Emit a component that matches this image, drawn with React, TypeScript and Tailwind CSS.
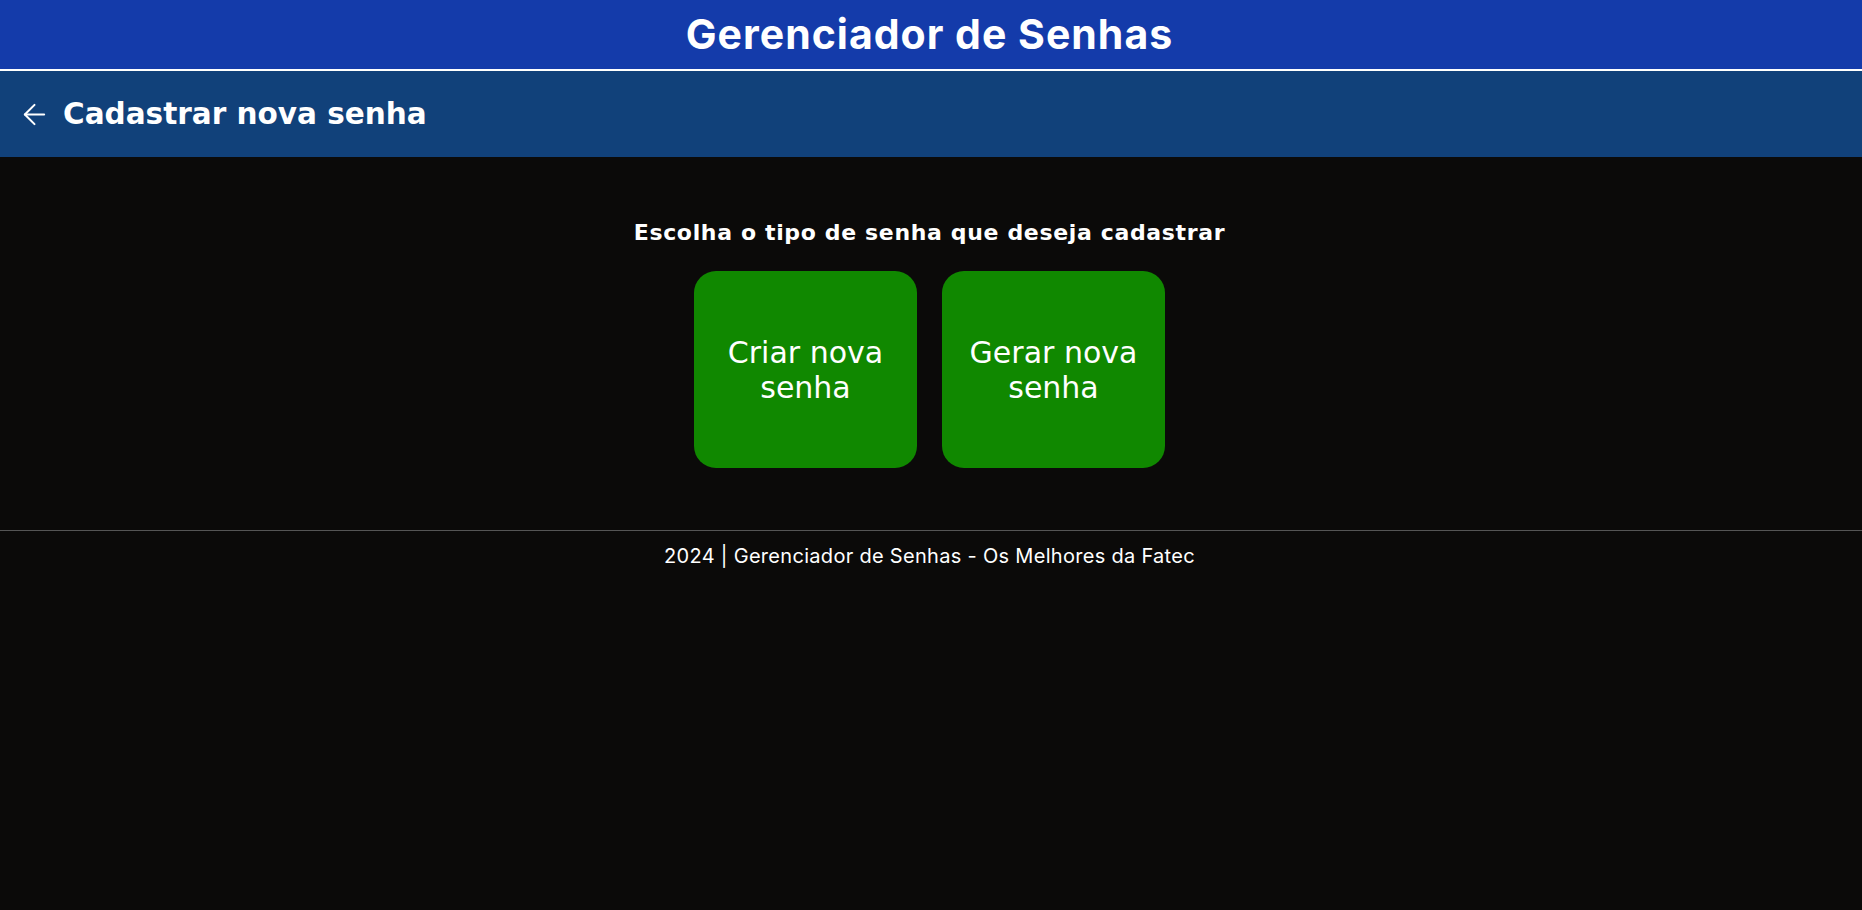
import React from "react";
import { ArrowLeft } from "lucide-react";

export default function App() {
  return (
    <div className="min-h-screen w-full bg-[#0b0a09] text-white">
      <header className="h-[71px] bg-[#143baa] border-b-2 border-white flex items-center justify-center pr-[3px]">
        <h1
          className="text-[41px] font-bold leading-none tracking-[1px]"
          style={{ fontFamily: "Inter, 'Open Sans', sans-serif" }}
        >
          Gerenciador de Senhas
        </h1>
      </header>
      <div
        className="h-[86px] bg-[#11417a] flex items-center pl-[18px] gap-[12px]"
        style={{ fontFamily: "'DejaVu Sans', Verdana, sans-serif" }}
      >
        <ArrowLeft size={33} strokeWidth={1.5} className="text-white" />
        <h2 className="text-[29.5px] font-bold">Cadastrar nova senha</h2>
      </div>
      <main
        className="flex flex-col items-center pt-[59px] pb-[62px] pr-[3px]"
        style={{ fontFamily: "'DejaVu Sans', Verdana, sans-serif" }}
      >
        <p className="text-[22px] font-bold tracking-[0.65px]">Escolha o tipo de senha que deseja cadastrar</p>
        <div className="flex gap-[25px] mt-[22px]">
          <button className="w-[223px] h-[197px] rounded-[22px] bg-[#108800] text-white text-[30px] leading-[35px] px-[12px] flex items-center justify-center text-center">
            Criar nova senha
          </button>
          <button className="w-[223px] h-[197px] rounded-[22px] bg-[#108800] text-white text-[30px] leading-[35px] px-[12px] flex items-center justify-center text-center">
            Gerar nova senha
          </button>
        </div>
      </main>
      <footer
        className="border-t border-[#555555] pt-[13px] pr-[3px] text-center text-[20px] leading-[24px] tracking-[0.3px]"
        style={{ fontFamily: "Inter, 'Open Sans', sans-serif" }}
      >
        2024 | Gerenciador de Senhas - Os Melhores da Fatec
      </footer>
    </div>
  );
}
